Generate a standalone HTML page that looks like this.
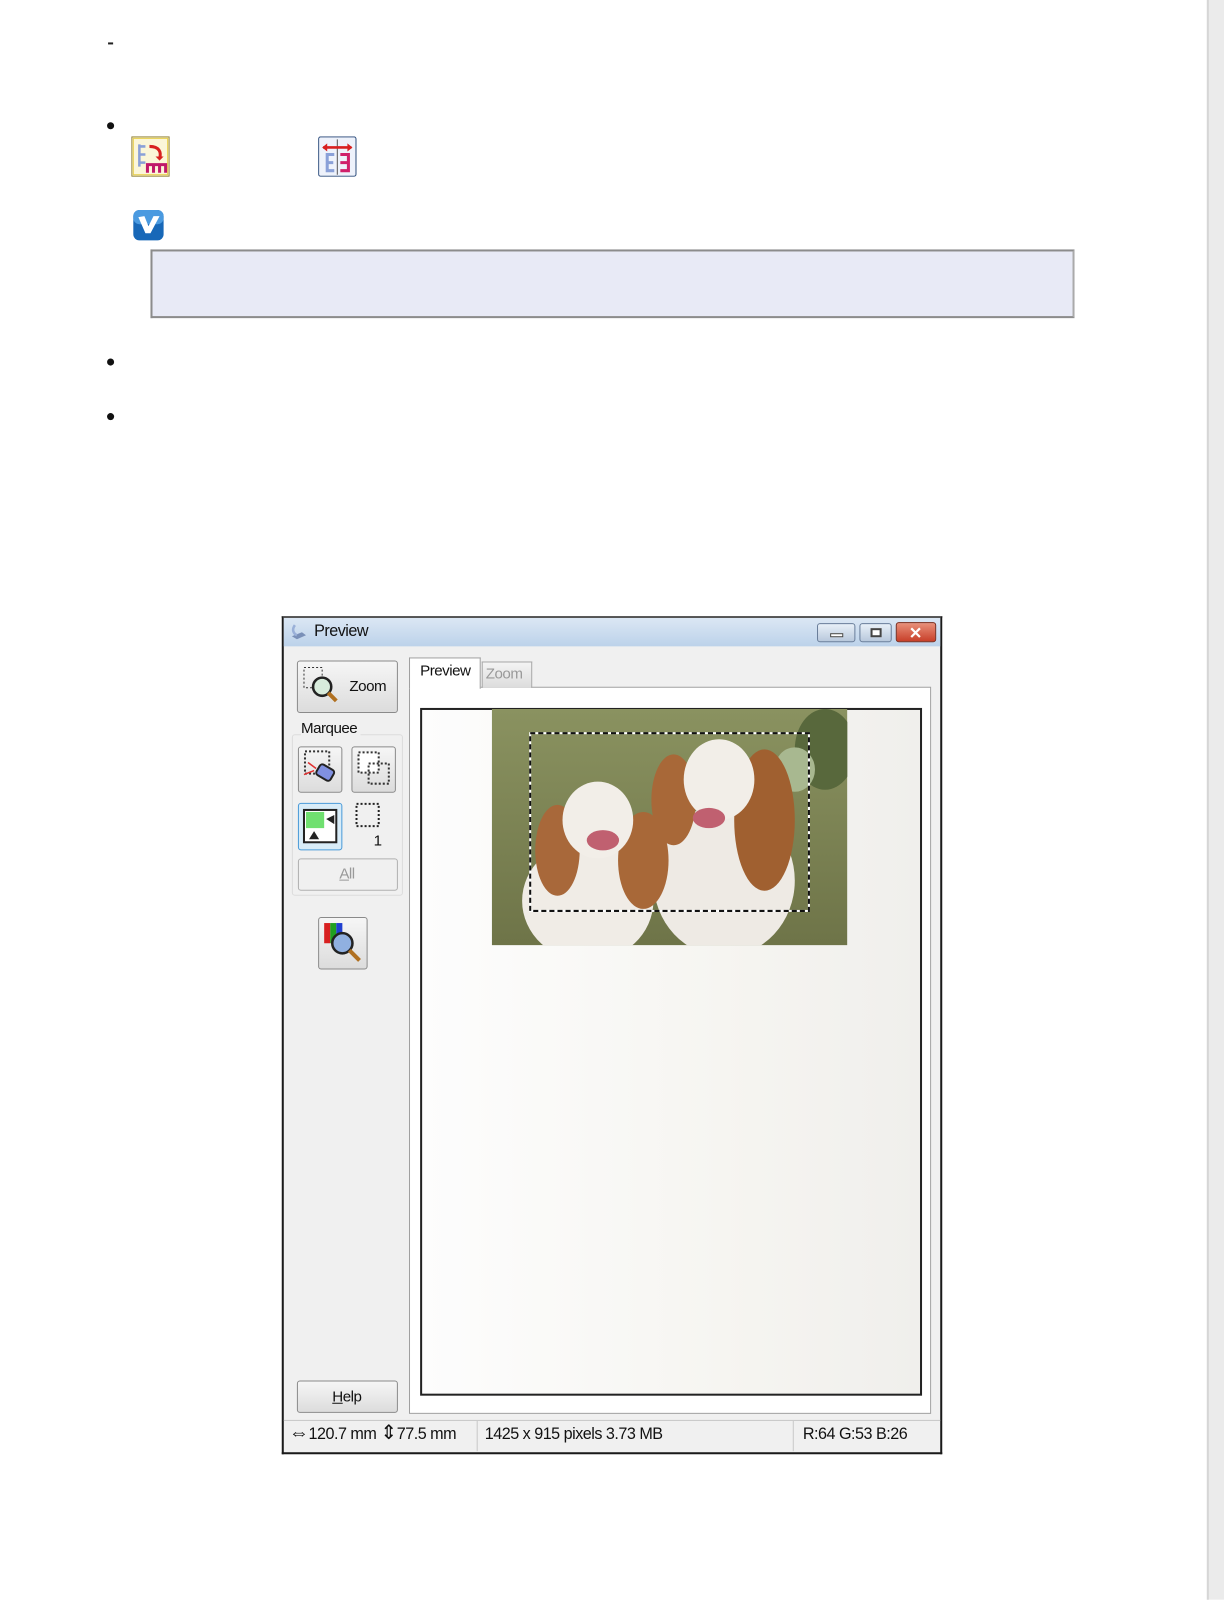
<!DOCTYPE html>
<html><head><meta charset="utf-8"><style>
*{margin:0;padding:0;box-sizing:border-box}
body{width:1224px;height:1584px;background:#fff;position:relative;overflow:hidden;font-family:"Liberation Sans",sans-serif}
#w{position:absolute;left:0;top:0;width:1212px;height:1569px;transform:scale(1.0099);transform-origin:0 0}
.a{position:absolute}
.btn{position:absolute;border:1px solid #8a8a8a;border-radius:3px;background:linear-gradient(#f6f6f6,#dcdcdc)}
.t{position:absolute;font-size:15px;color:#111;letter-spacing:-0.5px}
</style></head><body><div id="w">
<div class="a" style="left:1195px;top:0;width:29px;height:1584px;background:#ebebeb;border-left:2px solid #d6d6d6"></div>
<div class="a" style="left:107px;top:42px;width:5px;height:2px;background:#222"></div>
<div class="a" style="left:106px;top:121px;width:7px;height:7px;border-radius:50%;background:#111"></div>
<div class="a" style="left:106px;top:355px;width:7px;height:7px;border-radius:50%;background:#111"></div>
<div class="a" style="left:106px;top:409px;width:7px;height:7px;border-radius:50%;background:#111"></div>
<svg class="a" style="left:130px;top:135px" width="38" height="40"><rect x="0.5" y="0.5" width="37" height="39" fill="#fbf6d8" stroke="#8a7a2a"/><rect x="2" y="2" width="34" height="36" fill="none" stroke="#e8cf4a"/><path d="M8 8v22M8 10h6M8 18h6M8 26h6" stroke="#8aa0d8" stroke-width="2.5" fill="none"/><path d="M18 10c10 0 12 6 10 12" stroke="#d82020" stroke-width="3" fill="none"/><path d="M24 20l4 4 4-4z" fill="#d82020"/><path d="M16 36V28h18v8M22 28v8M28 28v8" stroke="#c0186a" stroke-width="3" fill="none"/></svg>
<svg class="a" style="left:315px;top:135px" width="38" height="40"><rect x="0.5" y="0.5" width="37" height="39" rx="2" fill="#eef2fb" stroke="#2a4a7a"/><path d="M19 3v35" stroke="#555"/><path d="M5 11h28" stroke="#d82020" stroke-width="2.5"/><path d="M4 11l5-4v8zM34 11l-5-4v8z" fill="#d82020"/><path d="M16 18h-7v16h7M9 26h6" stroke="#8aa0d8" stroke-width="3" fill="none"/><path d="M22 18h8v16h-8M22 26h7" stroke="#d0206a" stroke-width="3" fill="none"/></svg>
<svg class="a" style="left:131px;top:207px" width="32" height="32"><rect x="1" y="1" width="30" height="30" rx="6" fill="#1868b8"/><rect x="1" y="1" width="30" height="14" rx="6" fill="#4a9ae0"/><path d="M6 8l7 16h5l9-17h-6l-5 10-4-10z" fill="#fff"/></svg>
<div class="a" style="left:149px;top:247px;width:915px;height:68px;background:#e8eaf6;border:2px solid #8c8c8c;border-right-color:#aaa"></div>
<div class="a" style="left:279px;top:610px;width:654px;height:830px;background:#f0f0f0;border:2px solid #1a1a1a;border-top-color:#555"></div>
<div class="a" style="left:281px;top:612px;width:650px;height:28px;background:linear-gradient(#dbe7f4,#bcd2ea)"></div>
<svg class="a" style="left:286px;top:616px" width="20" height="20"><path d="M3 14l10-4 4 3-9 4z" fill="#7a90b8"/><path d="M6 3c-3 4-2 8 2 10" stroke="#9ab0d8" stroke-width="2.5" fill="none"/></svg>
<div class="t" style="left:311px;top:617px;font-size:16px">Preview</div>
<div class="a" style="left:809px;top:617px;width:38px;height:19px;border:1px solid #6a7e9a;border-radius:3px;background:linear-gradient(#e8f0f8,#b8c8dc)"><div class="a" style="left:12px;top:9px;width:13px;height:4px;border:1px solid #444;background:#fff"></div></div>
<div class="a" style="left:851px;top:617px;width:32px;height:19px;border:1px solid #6a7e9a;border-radius:3px;background:linear-gradient(#e8f0f8,#b8c8dc)"><div class="a" style="left:10px;top:4px;width:11px;height:9px;border:2px solid #444;background:#fff"></div></div>
<div class="a" style="left:887px;top:616px;width:40px;height:20px;border:1px solid #7a2a1a;border-radius:3px;background:linear-gradient(#e8907a,#c8402a)"><div class="t" style="left:12px;top:0px;color:#fff;font-weight:bold;font-size:16px">✕</div></div>
<div class="btn" style="left:294px;top:654px;width:100px;height:52px"></div>
<svg class="a" style="left:298px;top:658px" width="42" height="42"><rect x="3" y="3" width="18" height="20" fill="none" stroke="#333" stroke-dasharray="2 2"/><circle cx="21" cy="22" r="9" fill="#d8ecdc" stroke="#222" stroke-width="2.5"/><path d="M27 28l8 8" stroke="#b07020" stroke-width="4"/></svg>
<div class="t" style="left:346px;top:671px">Zoom</div>
<div class="a" style="left:289px;top:727px;width:110px;height:160px;border:1px solid #dcdcdc;border-radius:3px"></div>
<div class="t" style="left:298px;top:713px;background:#f0f0f0;padding-right:3px">Marquee</div>
<div class="btn" style="left:295px;top:739px;width:44px;height:46px"></div>
<svg class="a" style="left:297px;top:741px" width="40" height="42"><rect x="5" y="3" width="24" height="22" fill="none" stroke="#333" stroke-width="2" stroke-dasharray="2 2"/><path d="M4 26l10-4M8 14l8 6" stroke="#e03030" stroke-width="1.5"/><rect x="17" y="18" width="16" height="12" rx="3" transform="rotate(30 25 24)" fill="#8090e0" stroke="#222" stroke-width="2"/></svg>
<div class="btn" style="left:348px;top:739px;width:44px;height:46px"></div>
<svg class="a" style="left:350px;top:741px" width="40" height="42"><rect x="5" y="4" width="20" height="20" fill="#fff" stroke="#333" stroke-width="2" stroke-dasharray="2 2"/><rect x="15" y="15" width="20" height="20" fill="none" stroke="#333" stroke-width="2" stroke-dasharray="2 2"/></svg>
<div class="a" style="left:295px;top:795px;width:44px;height:47px;border:1px solid #4a9ad8;border-radius:3px;background:#d8ecf8"></div>
<svg class="a" style="left:299px;top:799px" width="36" height="38"><rect x="2" y="3" width="32" height="32" fill="#fff" stroke="#222" stroke-width="2"/><rect x="4" y="5" width="18" height="16" fill="#70e070"/><path d="M24 12l8-4v9z" fill="#222"/><path d="M12 24l-5 8h10z" fill="#222"/></svg>
<svg class="a" style="left:351px;top:794px" width="26" height="26"><rect x="2" y="2" width="22" height="22" fill="none" stroke="#222" stroke-width="2" stroke-dasharray="2 2"/></svg>
<div class="t" style="left:370px;top:824px">1</div>
<div class="a" style="left:295px;top:850px;width:99px;height:32px;border:1px solid #b0b0b0;border-radius:3px;background:#f0f0f0"></div>
<div class="t" style="left:336px;top:857px;color:#999"><u>A</u>ll</div>
<div class="btn" style="left:315px;top:908px;width:49px;height:52px"></div>
<svg class="a" style="left:317px;top:910px" width="46" height="48"><rect x="4" y="4" width="6" height="20" fill="#d82020"/><rect x="10" y="4" width="6" height="20" fill="#20a020"/><rect x="16" y="4" width="6" height="20" fill="#2040d0"/><circle cx="22" cy="24" r="10" fill="#90b0e0" stroke="#222" stroke-width="2.5"/><path d="M29 31l10 10" stroke="#b07020" stroke-width="4"/></svg>
<div class="btn" style="left:294px;top:1367px;width:100px;height:32px"></div>
<div class="t" style="left:329px;top:1375px"><u>H</u>elp</div>
<div class="a" style="left:405px;top:680px;width:517px;height:720px;border:1px solid #a0a0a0;background:#fff"></div>
<div class="a" style="left:405px;top:651px;width:71px;height:31px;border:1px solid #a0a0a0;border-bottom:none;background:#fff"></div>
<div class="t" style="left:416px;top:656px">Preview</div>
<div class="a" style="left:477px;top:655px;width:50px;height:26px;border:1px solid #a8a8a8;border-bottom:none;background:linear-gradient(#f4f4f4,#dcdcdc)"></div>
<div class="t" style="left:481px;top:659px;color:#999">Zoom</div>
<div class="a" style="left:416px;top:701px;width:497px;height:681px;border:2px solid #222;background:linear-gradient(90deg,#fdfdfd,#f6f5f1 60%,#f0efec)"></div>
<svg class="a" style="left:487px;top:702px" width="352" height="234">
<defs><linearGradient id="g" x1="0" y1="0" x2="0" y2="1"><stop offset="0" stop-color="#8a9260"/><stop offset="1" stop-color="#6e7448"/></linearGradient></defs>
<rect width="352" height="234" fill="url(#g)"/>
<ellipse cx="330" cy="40" rx="30" ry="40" fill="#58683c"/>
<ellipse cx="300" cy="60" rx="20" ry="22" fill="#a8b890"/>
<ellipse cx="95" cy="190" rx="65" ry="60" fill="#f0ece6"/>
<ellipse cx="230" cy="170" rx="70" ry="75" fill="#eeeae4"/>
<ellipse cx="65" cy="140" rx="22" ry="45" fill="#a8683a"/>
<ellipse cx="150" cy="150" rx="25" ry="48" fill="#a86838"/>
<ellipse cx="105" cy="110" rx="35" ry="38" fill="#f2eee8"/>
<ellipse cx="180" cy="90" rx="22" ry="45" fill="#a86838"/>
<ellipse cx="270" cy="110" rx="30" ry="70" fill="#a06030"/>
<ellipse cx="225" cy="70" rx="35" ry="40" fill="#f2eee8"/>
<ellipse cx="110" cy="130" rx="16" ry="10" fill="#c06070"/>
<ellipse cx="215" cy="108" rx="16" ry="10" fill="#c06070"/>
<rect x="38" y="24" width="276" height="176" fill="none" stroke="#fff" stroke-width="2"/>
<rect x="38" y="24" width="276" height="176" fill="none" stroke="#111" stroke-width="2" stroke-dasharray="5 3"/>
</svg>
<div class="a" style="left:281px;top:1406px;width:650px;height:1px;background:#c8c8c8"></div>
<div class="a" style="left:472px;top:1407px;width:1px;height:30px;background:#c8c8c8"></div>
<div class="a" style="left:785px;top:1407px;width:1px;height:30px;background:#c8c8c8"></div>
<div class="t" style="left:286px;top:1411px;font-size:16px"><span style="font-size:20px;line-height:16px">⇔</span>120.7 mm <span style="font-size:20px;line-height:16px">⇕</span>77.5 mm</div>
<div class="t" style="left:480px;top:1412px;font-size:16px">1425 x 915 pixels 3.73 MB</div>
<div class="t" style="left:795px;top:1412px;font-size:16px">R:64 G:53 B:26</div>
</div></body></html>
